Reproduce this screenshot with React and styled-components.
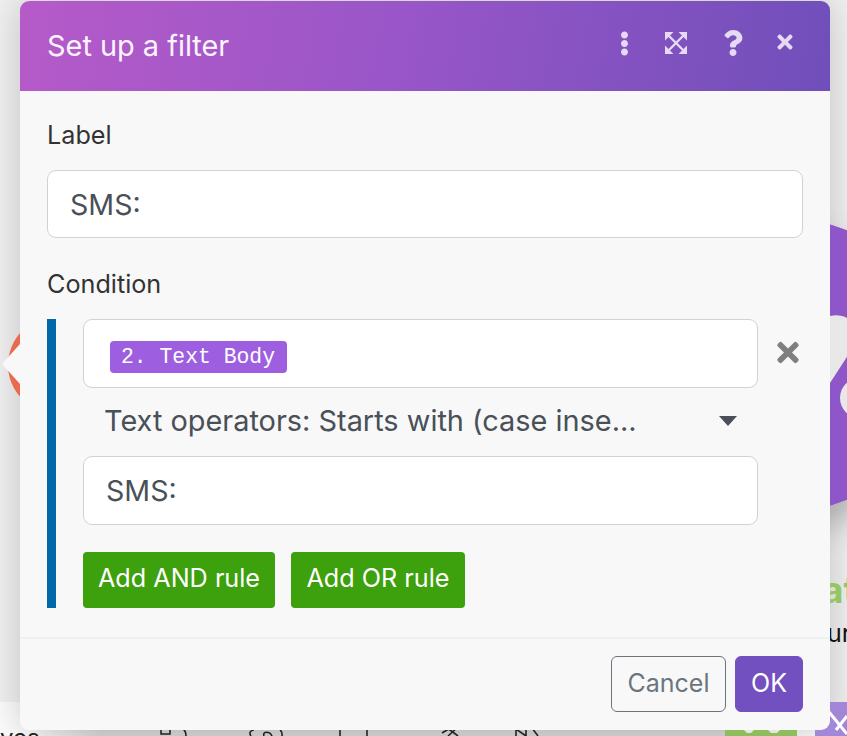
import React from 'react';
import styled, { createGlobalStyle } from 'styled-components';
import { FaEllipsisV, FaQuestion, FaTimes } from 'react-icons/fa';

const Global = createGlobalStyle`
  html, body { margin: 0; padding: 0; }
  body { background: #f7f7f7; font-family: Inter, "Liberation Sans", sans-serif; font-variation-settings: "opsz" 14; overflow: hidden; }
  * { box-sizing: border-box; }
`;

const Page = styled.div`
  position: relative;
  width: 847px;
  height: 736px;
  overflow: hidden;
  background: #f0f0f0;
`;

/* The scenario canvas behind the dialog */
const Canvas = styled.svg`
  position: absolute;
  inset: 0;
  width: 847px;
  height: 736px;
`;

const CanvasText = styled.span`
  position: absolute;
  left: ${p => p.$x}px;
  top: ${p => p.$y}px;
  font-size: ${p => p.$size}px;
  font-weight: ${p => p.$weight};
  line-height: 1;
  color: ${p => p.$color};
  white-space: nowrap;
`;

const Pointer = styled.div`
  position: absolute;
  left: 2px;
  top: 344px;
  width: 0;
  height: 0;
  border-top: 20px solid transparent;
  border-bottom: 20px solid transparent;
  border-right: 18px solid #f8f8f8;
`;

const Dialog = styled.section`
  position: absolute;
  left: 20px;
  top: 1px;
  width: 810px;
  height: 729px;
  display: flex;
  flex-direction: column;
  background: #f8f8f8;
  border-radius: 9px;
`;

const Shade = styled.div`
  position: absolute;
  left: 20px;
  top: 1px;
  width: 810px;
  height: 729px;
  border-radius: 9px;
  box-shadow: 0 0 36px rgba(0, 0, 0, 0.2);
`;

const Header = styled.header`
  height: 90px;
  flex: none;
  display: flex;
  align-items: center;
  padding: 0 27px;
  border-radius: 9px 9px 0 0;
  background: linear-gradient(100deg, #b65ac9 0%, #9a56c8 45%, #704fba 100%);
`;

const Title = styled.h1`
  margin: 0;
  flex: 1;
  font-size: 28.9px;
  font-weight: 400;
  line-height: 1;
  color: #fbf4fd;
`;

const IconButton = styled.span`
  position: absolute;
  top: ${p => p.$top}px;
  left: ${p => p.$left}px;
  width: ${p => p.$w}px;
  height: ${p => p.$h}px;
  display: flex;
  color: #e6d9f3;
  svg { width: 100%; height: 100%; display: block; }
`;

const Body = styled.div`
  flex: 1;
  padding: 30px 27px 0;
`;

const FieldLabel = styled.label`
  display: block;
  font-size: 25.2px;
  line-height: 28px;
  color: #333;
`;

const TextBox = styled.div`
  height: ${p => p.$h}px;
  display: flex;
  align-items: center;
  padding: 0 23px 0 22px;
  background: #fff;
  border: 1px solid #d2d2d2;
  border-radius: 9px;
  font-size: 28.6px;
  color: #495057;
`;

const LabelBox = styled(TextBox)`
  margin: 21px 0 32px;
`;

const Rule = styled.div`
  margin-top: 21px;
  height: 289px;
  display: flex;
  border-left: 9px solid #0069a8;
  padding-left: 27px;
`;

const RuleFields = styled.div`
  width: 675px;
  flex: none;
`;

const OperatorRow = styled.div`
  height: 68px;
  display: flex;
  align-items: center;
  justify-content: space-between;
  padding: 0 21px 3px 21px;
  font-size: 28.9px;
  white-space: nowrap;
  color: #495057;
`;

const Caret = styled.svg`
  width: 18px;
  height: 10px;
  fill: #495057;
  display: block;
`;

const Tag = styled.span`
  margin: 6px 0 0 4px;
  display: inline-flex;
  align-items: center;
  height: 32px;
  padding: 0 12px 0 11px;
  background: #9d5fe0;
  border-radius: 4px;
  font-family: "Liberation Mono", monospace;
  font-size: 21.4px;
  color: #fff;
`;

const ButtonRow = styled.div`
  margin-top: 27px;
  display: flex;
  gap: 16px;
`;

const GreenButton = styled.button`
  height: 56px;
  width: ${p => p.$w}px;
  padding: 0 0 4px;
  border: 0;
  border-radius: 4px;
  background: #3da00d;
  color: #fff;
  font: 400 25.2px Inter, sans-serif;
  font-variation-settings: "opsz" 14;
`;

const RemoveRule = styled.span`
  margin: 18px 0 0 15px;
  width: 31px;
  height: 31px;
  color: #7f7f7f;
  svg { width: 100%; height: 100%; display: block; }
`;

const Footer = styled.footer`
  flex: none;
  height: 93px;
  display: flex;
  justify-content: flex-end;
  gap: 9px;
  padding: 17px 27px 0;
  border-top: 2px solid #f0f0f0;
`;

const FooterButton = styled.button`
  height: 56px;
  width: ${p => p.$w}px;
  padding: 0 0 3px;
  border-radius: 6px;
  font: 400 25px Inter, sans-serif;
  font-variation-settings: "opsz" 14;
  border: 1px solid ${p => (p.$primary ? '#7350bf' : '#6c757d')};
  background: ${p => (p.$primary ? '#7350bf' : 'transparent')};
  color: ${p => (p.$primary ? '#fff' : '#6c757d')};
`;

const ExpandIcon = () => (
  <svg viewBox="0 0 24 24" fill="currentColor">
    <path d="M1 1h8.5L1 9.5zM23 1h-8.500L23 9.500zM1 23h8.500L1 14.500zM23 23h-8.500L23 14.500z" />
    <path d="M4 4L20 20M20 4L4 20" stroke="currentColor" strokeWidth="2.4" fill="none" />
  </svg>
);

export default function App() {
  return (
    <Page>
      <Canvas viewBox="0 0 847 736">
        <defs>
          <filter id="moduleShadow" x="-30%" y="-30%" width="160%" height="160%">
            <feDropShadow dx="0" dy="18" stdDeviation="16" floodColor="#000" floodOpacity="0.22" />
          </filter>
          <linearGradient id="barFade" x1="0" x2="1" y1="0" y2="0">
            <stop offset="0" stopColor="#fbfbfb" />
            <stop offset="0.1" stopColor="#d8d8d8" />
            <stop offset="1" stopColor="#d8d8d8" />
          </linearGradient>
        </defs>
        <rect x="0" y="702" width="847" height="34" fill="#fbfbfb" />
        <rect x="30" y="730" width="695" height="6" fill="url(#barFade)" />
        <circle cx="790" cy="365" r="146" fill="#8f56ca" filter="url(#moduleShadow)" />
      </Canvas>
      <Global />
      <Shade />
      <Canvas viewBox="0 0 847 736">
        <circle cx="56" cy="365" r="48" fill="#e86a4f" />
        <circle cx="790" cy="365" r="146" fill="#8f56ca" />
        <path d="M830 316 C838 314 845 316 850 320 V352 L830 383 Z" fill="#e8e8e8" />
        <circle cx="860" cy="398" r="20" fill="#e8e8e8" />
        <rect x="725" y="728" width="72" height="8" fill="#8fbd5d" />
        <path d="M743 729 H755 L751 733 H747 Z M767 729 H781 L777 733 H771 Z" fill="#e6e6e6" />
        <rect x="815" y="702" width="32" height="34" fill="#a287d9" />
        <path d="M829 712 L847 734 M847 716 L836 730" stroke="#fff" strokeWidth="3" fill="none" />
        <g fill="none" stroke="#222" strokeWidth="1.6">
          <path d="M161 729 V734 H170 V729 M183 729 C186 731 186 734 186 736" />
          <path d="M251 736 C248 732 252 730 254 730 M264 736 C262 731 270 731 272 736 M280 730 C283 732 282 735 282 736" />
          <path d="M340 729 V736 M367 729 V736" />
          <path d="M442 733 L452 727 M446 727 L458 736 M458 727 L448 736" />
          <path d="M516 736 V729 L526 736 V729 M532 728 L538 736" />
        </g>
      </Canvas>
      <CanvasText $x={0} $y={726} $size={24} $weight={400} $color="#222">ves</CanvasText>
      <CanvasText $x={822} $y={571} $size={37} $weight={700} $color="#94c663">at</CanvasText>
      <CanvasText $x={827} $y={621} $size={25} $weight={400} $color="#111">ur</CanvasText>
      <Pointer />
      <Dialog>
        <Header>
          <Title>Set up a filter</Title>
          <IconButton $left={598} $top={30} $w={13} $h={25}><FaEllipsisV /></IconButton>
          <IconButton $left={644} $top={30} $w={24} $h={24}><ExpandIcon /></IconButton>
          <IconButton $left={702} $top={29} $w={22} $h={26}><FaQuestion /></IconButton>
          <IconButton $left={754} $top={30} $w={22} $h={22}><FaTimes /></IconButton>
        </Header>
        <Body>
          <FieldLabel>Label</FieldLabel>
          <LabelBox $h={68}>SMS:</LabelBox>
          <FieldLabel>Condition</FieldLabel>
          <Rule>
            <RuleFields>
              <TextBox $h={69}><Tag>2. Text Body</Tag></TextBox>
              <OperatorRow>
                <span>Text operators: Starts with (case inse...</span>
                <Caret viewBox="0 0 18 10"><path d="M0 0h18L9 10z" /></Caret>
              </OperatorRow>
              <TextBox $h={69}>SMS:</TextBox>
              <ButtonRow>
                <GreenButton $w={192}>Add AND rule</GreenButton>
                <GreenButton $w={174}>Add OR rule</GreenButton>
              </ButtonRow>
            </RuleFields>
            <RemoveRule><FaTimes /></RemoveRule>
          </Rule>
        </Body>
        <Footer>
          <FooterButton $w={115}>Cancel</FooterButton>
          <FooterButton $primary $w={68}>OK</FooterButton>
        </Footer>
      </Dialog>
    </Page>
  );
}
